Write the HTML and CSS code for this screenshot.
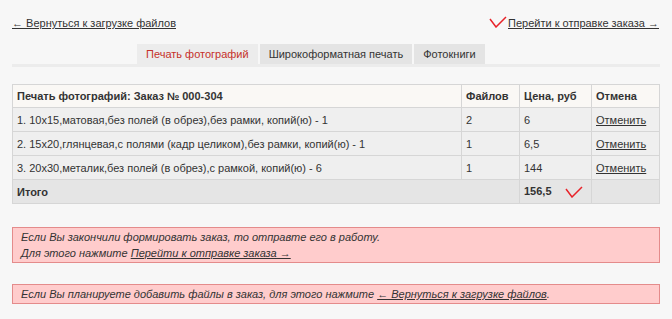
FILE: index.html
```html
<!DOCTYPE html>
<html lang="ru">

<head>
    <meta charset="UTF-8">
    <meta name="viewport" content="width=device-width, initial-scale=1.0">
    <title>Заказ</title>
    <link rel="stylesheet" href="styles.css">
</head>

<body>
    <div class="page">
        <!-- верхние ссылки -->
        <div class="top_links">
            <a href="javascript:;">&larr; Вернуться к загрузке файлов</a>
            <span class="next_link">
                <svg class="tick" width="18" height="12" viewBox="0 0 18 12"><polyline points="1,3 7,11 17,1" /></svg>
                <a href="javascript:;">Перейти к отправке заказа &rarr;</a>
            </span>
        </div>

        <!-- вкладки -->
        <ul class="tabs">
            <li class="active">Печать фотографий</li>
            <li>Широкоформатная печать</li>
            <li>Фотокниги</li>
        </ul>

        <table class="order">
            <tr class="head">
                <th class="col_name">Печать фотографий: Заказ № 000-304</th>
                <th class="col_files">Файлов</th>
                <th class="col_price">Цена, руб</th>
                <th class="col_cancel">Отмена</th>
            </tr>
            <tr>
                <td>1. 10x15,матовая,без полей (в обрез),без рамки, копий(ю) - 1</td>
                <td>2</td>
                <td>6</td>
                <td><a href="javascript:;">Отменить</a></td>
            </tr>
            <tr>
                <td>2. 15x20,глянцевая,с полями (кадр целиком),без рамки, копий(ю) - 1</td>
                <td>1</td>
                <td>6,5</td>
                <td><a href="javascript:;">Отменить</a></td>
            </tr>
            <tr>
                <td>3. 20x30,металик,без полей (в обрез),с рамкой, копий(ю) - 6</td>
                <td>1</td>
                <td>144</td>
                <td><a href="javascript:;">Отменить</a></td>
            </tr>
            <tr class="total">
                <td colspan="2">Итого</td>
                <td class="sum">156,5 <svg class="tick tick_total" width="18" height="12" viewBox="0 0 18 12"><polyline points="1,3 7,11 17,1" /></svg></td>
                <td></td>
            </tr>
        </table>

        <!-- сообщения -->
        <div class="note">
            Если Вы закончили формировать заказ, то отправте его в работу.<br>
            Для этого нажмите <a href="javascript:;">Перейти к отправке заказа &rarr;</a>
        </div>
        <div class="note">
            Если Вы планируете добавить файлы в заказ, для этого нажмите <a href="javascript:;">&larr; Вернуться к загрузке файлов</a>.
        </div>
    </div>
</body>

</html>
```

FILE: styles.css
```css
* {
    margin: 0;
    padding: 0;
    list-style: none;
}

body {
    background-color: #f7f7f7;
    font-family: "Liberation Sans", Arial, sans-serif;
    font-size: 11px;
    color: #333;
}

a {
    color: #333;
    text-decoration: underline;
}

.page {
    width: 648px;
    padding: 12px;
}

/* верхние ссылки */
.top_links {
    display: flex;
    justify-content: space-between;
    align-items: flex-end;
    height: 16px;
    line-height: 16px;
    padding-top: 3px;
}

.next_link {
    display: flex;
    align-items: flex-end;
    padding-right: 1px;
}

.tick {
    display: inline-block;
}

.tick polyline {
    fill: none;
    stroke: #e8232a;
    stroke-width: 1.5;
}

.next_link .tick {
    margin-right: 1px;
    margin-bottom: 3px;
}

/* вкладки */
.tabs {
    display: flex;
    gap: 2px;
    height: 20px;
    padding-left: 125px;
    margin-top: 13px;
    border-bottom: 3px solid #ececec;
    align-items: flex-start;
}

.tabs li {
    height: 20px;
    line-height: 20px;
    padding: 0 9px;
    background-color: #e4e4e4;
    color: #333;
}

.tabs li.active {
    height: 23px;
    background-color: #ececec;
    color: #c5312a;
}

/* таблица */
.order {
    width: 100%;
    margin-top: 17px;
    border-collapse: collapse;
    border: 1px solid #dcdcdc;
}

.order th,
.order td {
    height: 23px;
    padding: 0 4px;
    text-align: left;
    border: 1px solid #d6d6d6;
    background-color: #efefef;
    white-space: nowrap;
}

.order th {
    height: 22px;
    font-weight: bold;
    background-color: #faf8f5;
}

.order .col_files {
    width: 49px;
}

.order .col_price {
    width: 63px;
}

.order .col_cancel {
    width: 59px;
}

.order .total td {
    font-weight: bold;
    background-color: #e5e5e5;
}

.tick_total {
    vertical-align: -3px;
    margin-left: 10px;
}

/* сообщения */
.note {
    margin-top: 23px;
    padding: 1px 8px;
    line-height: 16px;
    font-style: italic;
    background-color: #ffcccc;
    border: 1px solid #e48b8b;
}

.note + .note {
    margin-top: 21px;
}
```
